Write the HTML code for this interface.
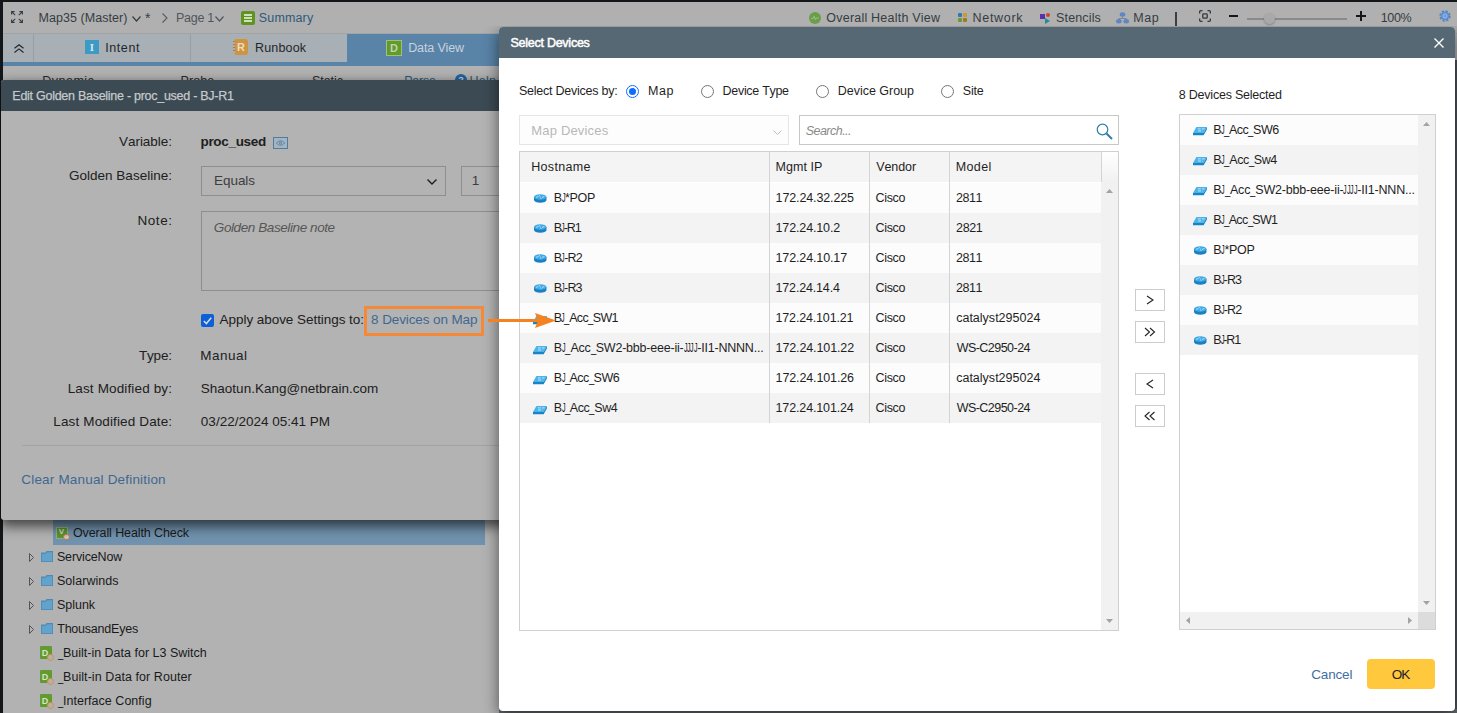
<!DOCTYPE html>
<html lang="en">
<head>
<meta charset="utf-8">
<title>Select Devices</title>
<style>
*{box-sizing:border-box;margin:0;padding:0}
html,body{width:1457px;height:713px;overflow:hidden;background:#14171a}
body{position:relative;font-family:"Liberation Sans",sans-serif;font-size:12.5px;color:#1c1c1c;font-kerning:none}
.a{position:absolute}
.sj,.su{display:inline-block;transform-origin:0 0;margin-right:var(--ls);letter-spacing:0}
.sj{transform:scaleX(.58);width:.29em}
.su{transform:scaleX(.76);width:.4226em}
.t{position:absolute;white-space:nowrap;line-height:20px;height:20px}
svg{position:absolute;overflow:visible}
#app{left:3px;top:2px;width:1454px;height:711px;background:#b2b2b2}
#toolbar{left:3px;top:2px;width:1454px;height:31px;background:#b0b0b0}
.tb{color:#353d42}
#tabs{left:3px;top:34px;width:496px;height:28px;background:#a8afb5}
.tab{color:#23272b}
#tabline{left:3px;top:62px;width:496px;height:4px;background:#5983a7}
.sub{color:#2a2a2a}
#dlg1{left:1px;top:80px;width:520px;height:440px;background:#b3b3b3;border-radius:3px 0 0 3px;box-shadow:0 5px 13px 1px rgba(0,0,0,.65)}
#dlg1hd{left:1px;top:80px;width:520px;height:31px;background:#3c4a53;border-radius:3px 0 0 0}
.l1{color:#202020}
.box{position:absolute;border:1px solid #8e8e8e;background:#b3b3b3}
.tr{color:#1a1a1a}
#dlg2{left:499px;top:27px;width:956px;height:684px;background:#fff;border-radius:4px;box-shadow:0 5px 15px rgba(0,0,0,.55);clip-path:inset(-1px -30px -30px -30px)}
#dlg2hd{left:499px;top:27px;width:956px;height:31px;background:#566874;border-radius:4px 4px 0 0}
.d{color:#1f1f1f}
.radio{position:absolute;width:13px;height:13px;border:1px solid #767676;border-radius:50%;background:#fff}
.radio.on{border:1.500px solid #0d6efd}
.radio.on:after{content:"";position:absolute;left:1.500px;top:1.500px;width:7px;height:7px;border-radius:50%;background:#0d6efd}
.row{position:absolute;left:520px;width:581px;height:30px}
.odd{background:#fcfcfc}.even{background:#f3f3f3}
.vl{position:absolute;width:1px;background:#d4d4d4}
.mv{position:absolute;left:1135px;width:30px;height:22px;border:1px solid #ccc;background:#fff}
.sbar{position:absolute;background:#f1f1f1}
.rrow{position:absolute;left:1180px;width:238px;height:30px}
</style>
</head>
<body>
<div id="app" class="a"></div>
<div id="toolbar" class="a"></div><div class="a" style="left:3px;top:33px;width:1454px;height:1px;background:#a0a4a7"></div>
<svg style="left:10.700px;top:10.500px" width="12" height="12" viewBox="0 0 12 12" fill="none" stroke="#353d42" stroke-width="1.100"><path d="M0.600 3.600V0.600H3.600M0.800 0.800L4.200 4.200M8.400 0.600H11.400V3.600M11.200 0.800L7.800 4.200M0.600 8.400V11.400H3.600M0.800 11.200L4.200 7.800M11.400 8.400V11.400H8.400M11.200 11.200L7.800 7.800"/></svg>
<div class="t tb" style="left:38.47px;top:8px;font-size:12.5px;letter-spacing:0.06px;">Map35 (Master)</div>
<svg style="left:132px;top:15.500px" width="9" height="6" viewBox="0 0 9 6" fill="none" stroke="#353d42" stroke-width="1.200"><path d="M0.500 0.500L4.500 5L8.500 0.500"/></svg>
<div class="t tb" style="left:145px;font-size:14px;top:8px">*</div>
<svg style="left:161.500px;top:13px" width="6" height="10" viewBox="0 0 6 10" fill="none" stroke="#555c61" stroke-width="1.100"><path d="M0.500 0.500L5 5L0.500 9.500"/></svg>
<div class="t tb" style="left:176.07px;top:8px;font-size:12.5px;letter-spacing:-0.3px;color:#50575c">Page 1</div>
<svg style="left:215px;top:15.500px" width="9" height="6" viewBox="0 0 9 6" fill="none" stroke="#50575c" stroke-width="1.200"><path d="M0.500 0.500L4.500 5L8.500 0.500"/></svg>
<div class="a" style="left:241px;top:11px;width:14px;height:14px;border-radius:2px;background:#5f9422"></div>
<div class="a" style="left:244px;top:14px;width:8px;height:1.500px;background:#cfe0b8;box-shadow:0 3px 0 #cfe0b8,0 6px 0 #cfe0b8"></div>
<div class="t tb" style="left:258.83px;top:8px;font-size:12.5px;letter-spacing:0.14px;color:#2f5a7a">Summary</div>
<div class="a" style="left:809px;top:11.500px;width:12px;height:12px;border-radius:50%;background:#6a9e4a"></div>
<svg style="left:811px;top:14.500px" width="8" height="6" viewBox="0 0 9 7" fill="none" stroke="#a9c996" stroke-width="0.900"><path d="M0 4H2.500L3.500 1.500L5 5.500L6 3.500H9"/></svg>
<div class="t tb" style="left:826.31px;top:8px;font-size:12.5px;letter-spacing:0.22px;">Overall Health View</div>
<div class="a" style="left:958px;top:13px;width:4px;height:4px;background:#2f78b4;border-radius:1px;box-shadow:5px 0 0 #c99a2e,0 5px 0 #6b9a34,5px 5px 0 #9a7a24"></div>
<div class="t tb" style="left:972.57px;top:8px;font-size:12.5px;letter-spacing:0.68px;">Network</div>
<div class="a" style="left:1040px;top:14px;width:5px;height:5px;background:#5a2fa8"></div><div class="a" style="left:1046px;top:13px;width:4px;height:4px;border-radius:50%;background:#c8452d"></div><svg style="left:1045px;top:18px" width="5" height="6" viewBox="0 0 5 6"><path d="M0 0L5 3L0 6z" fill="#1d8f9a"/></svg>
<div class="t tb" style="left:1056.03px;top:8px;font-size:12.5px;letter-spacing:0.15px;">Stencils</div>
<svg style="left:1116px;top:12px" width="13" height="12" viewBox="0 0 13 12"><ellipse cx="6.500" cy="2.500" rx="2.800" ry="2.200" fill="#5e86c4"/><ellipse cx="2.800" cy="9.300" rx="2.800" ry="2.200" fill="#5e86c4"/><ellipse cx="10.200" cy="9.300" rx="2.800" ry="2.200" fill="#5e86c4"/><path d="M6.500 4.500V6.500M2.800 7.500V6.500H10.200V7.500" stroke="#6f7f90" stroke-width=".8" fill="none"/></svg>
<div class="t tb" style="left:1133.27px;top:8px;font-size:12.5px;letter-spacing:0.62px;">Map</div>
<div class="a" style="left:1175px;top:12px;width:1.500px;height:14px;background:#3a3f43"></div>
<svg style="left:1199px;top:10px" width="12" height="12" viewBox="0 0 12 12" fill="none" stroke="#33393d" stroke-width="1.300"><path d="M0.650 3.500V1.700Q0.650 0.650 1.700 0.650H3.500M8.500 0.650H10.300Q11.350 0.650 11.350 1.700V3.500M11.350 8.500V10.300Q11.350 11.350 10.300 11.350H8.500M3.500 11.350H1.700Q0.650 11.350 0.650 10.300V8.500"/><rect x="3.800" y="3.800" width="4.400" height="4.400" rx=".8"/></svg>
<div class="a" style="left:1229px;top:15px;width:9px;height:2px;background:#15181a"></div>
<div class="a" style="left:1247px;top:18px;width:100px;height:1.500px;background:#8a8a8a"></div>
<div class="a" style="left:1264px;top:13px;width:11px;height:11px;border-radius:50%;background:#a9a9a9;box-shadow:0 1px 2px rgba(0,0,0,.25)"></div>
<div class="a" style="left:1356px;top:15px;width:10px;height:2px;background:#15181a"></div><div class="a" style="left:1360px;top:11px;width:2px;height:10px;background:#15181a"></div>
<div class="t tb" style="left:1380.75px;top:8px;font-size:12.5px;letter-spacing:-0.36px;">100%</div>
<svg style="left:1439px;top:10px" width="12" height="12" viewBox="0 0 13 13"><circle cx="6.500" cy="6.500" r="5.200" fill="none" stroke="#5586c8" stroke-width="2" stroke-dasharray="2.500 1.580"/><circle cx="6.500" cy="6.500" r="4.600" fill="#5b8bcd"/><circle cx="6.500" cy="6.500" r="2.300" fill="#6d99d6" stroke="#a9c1e4" stroke-width="1"/></svg>
<div id="tabs" class="a"></div>
<div class="a" style="left:33px;top:34px;width:1px;height:28px;background:#979ea4"></div>
<div class="a" style="left:190px;top:34px;width:1px;height:28px;background:#979ea4"></div>
<div class="a" style="left:347px;top:34px;width:152px;height:28px;background:#5983a7"></div>
<svg style="left:14px;top:44px" width="10" height="9" viewBox="0 0 10 9" fill="none" stroke="#23272b" stroke-width="1.200"><path d="M0.500 4.300L5 0.700L9.500 4.300M0.500 8.500L5 4.900L9.500 8.500"/></svg>
<div class="a" style="left:85px;top:40px;width:14px;height:14px;background:#3d9ac4"></div><div class="t" style="left:85px;top:37px;width:14px;text-align:center;font:bold 11px/20px 'Liberation Serif',serif;color:#d5e6ee">I</div>
<div class="t tab" style="left:105.25px;top:38px;font-size:12.5px;letter-spacing:0.57px;">Intent</div>
<div class="a" style="left:234px;top:39px;width:14px;height:16px;border-radius:3px;background:#cf9440"></div><div class="a" style="left:233px;top:41px;width:2px;height:12px;background:repeating-linear-gradient(#b57c2c 0 1.500px,#a8afb5 1.500px 3px)"></div><div class="t" style="left:234px;top:37px;width:14px;text-align:center;font:bold 11px/20px 'Liberation Sans',sans-serif;color:#ecdcc2">R</div>
<div class="t tab" style="left:254.97px;top:38px;font-size:12.5px;letter-spacing:0.18px;">Runbook</div>
<div class="a" style="left:386px;top:40px;width:16px;height:16px;background:#639a2c;border:1px solid #9fc27a"></div><div class="t" style="left:386px;top:38px;width:16px;text-align:center;font:bold 11px/20px 'Liberation Sans',sans-serif;color:#bdd3a8">D</div>
<div class="t tab" style="left:408.17px;top:38px;font-size:12.5px;letter-spacing:-0.13px;color:#c6d3de">Data View</div>
<div id="tabline" class="a"></div>
<div class="t sub" style="left:42.17px;top:71px;font-size:12.5px;letter-spacing:0.51px;">Dynamic</div>
<div class="t sub" style="left:180.47px;top:71px;font-size:12.5px;letter-spacing:0.08px;">Probe</div>
<div class="t sub" style="left:312.03px;top:71px;font-size:12.5px;letter-spacing:-0.07px;">Static</div>
<div class="t sub" style="left:404.27px;top:71px;font-size:12.5px;letter-spacing:-0.27px;color:#2d5878">Parse</div>
<div class="a" style="left:455px;top:74px;width:12px;height:12px;border-radius:50%;background:#24639c"></div><div class="t" style="left:455px;top:70px;width:12px;text-align:center;font:bold 9px/20px 'Liberation Sans',sans-serif;color:#c9d6e2">?</div>
<div class="t sub" style="left:469.47px;top:71px;font-size:12.5px;letter-spacing:0.28px;color:#2d5878">Help</div>
<div class="a" style="left:53px;top:520px;width:432px;height:25px;background:#7192ae"></div>
<div class="a" style="left:56px;top:527px;width:12px;height:12px;background:#5c9236;border:1px solid #8fb56e"></div><div class="t" style="left:56px;top:522px;width:11px;text-align:center;font:bold 8px/20px 'Liberation Sans',sans-serif;color:#cfe0bd">V</div><div class="a" style="left:63px;top:533.500px;width:6.500px;height:6.500px;border-radius:50%;background:#cfc6c0;border:1.500px solid #c17c45"></div>
<div class="t tr" style="left:72.91px;top:523px;font-size:12.5px;letter-spacing:-0.1px;">Overall Health Check</div>
<svg style="left:29px;top:552.5px" width="5" height="9" viewBox="0 0 5 9" fill="none" stroke="#4a4a4a" stroke-width="0.900"><path d="M0.500 0.500L4.500 4.500L0.500 8.500z"/></svg>
<svg style="left:41px;top:551px" width="12" height="11" viewBox="0 0 12 11"><path d="M0 1.500H4.500L5.500 0H12V11H0z" fill="#4d8ab5"/><path d="M0.800 2.800H5L6 1.200H11.200V10.200H0.800z" fill="#62a3cc"/></svg>
<div class="t tr" style="left:56.93px;top:547px;font-size:12.5px;letter-spacing:-0.14px;">ServiceNow</div>
<svg style="left:29px;top:576.5px" width="5" height="9" viewBox="0 0 5 9" fill="none" stroke="#4a4a4a" stroke-width="0.900"><path d="M0.500 0.500L4.500 4.500L0.500 8.500z"/></svg>
<svg style="left:41px;top:575px" width="12" height="11" viewBox="0 0 12 11"><path d="M0 1.500H4.500L5.500 0H12V11H0z" fill="#4d8ab5"/><path d="M0.800 2.800H5L6 1.200H11.200V10.200H0.800z" fill="#62a3cc"/></svg>
<div class="t tr" style="left:56.93px;top:571px;font-size:12.5px;letter-spacing:0.06px;">Solarwinds</div>
<svg style="left:29px;top:600.5px" width="5" height="9" viewBox="0 0 5 9" fill="none" stroke="#4a4a4a" stroke-width="0.900"><path d="M0.500 0.500L4.500 4.500L0.500 8.500z"/></svg>
<svg style="left:41px;top:599px" width="12" height="11" viewBox="0 0 12 11"><path d="M0 1.500H4.500L5.500 0H12V11H0z" fill="#4d8ab5"/><path d="M0.800 2.800H5L6 1.200H11.200V10.200H0.800z" fill="#62a3cc"/></svg>
<div class="t tr" style="left:56.93px;top:595px;font-size:12.5px;letter-spacing:-0.01px;">Splunk</div>
<svg style="left:29px;top:624.5px" width="5" height="9" viewBox="0 0 5 9" fill="none" stroke="#4a4a4a" stroke-width="0.900"><path d="M0.500 0.500L4.500 4.500L0.500 8.500z"/></svg>
<svg style="left:41px;top:623px" width="12" height="11" viewBox="0 0 12 11"><path d="M0 1.500H4.500L5.500 0H12V11H0z" fill="#4d8ab5"/><path d="M0.800 2.800H5L6 1.200H11.200V10.200H0.800z" fill="#62a3cc"/></svg>
<div class="t tr" style="left:57.22px;top:619px;font-size:12.5px;letter-spacing:-0.22px;">ThousandEyes</div>
<div class="a" style="left:40px;top:646px;width:12px;height:13px;background:#629a2e;border-radius:1px"></div><div class="t" style="left:40px;top:643px;width:10px;text-align:center;font:bold 9px/20px 'Liberation Sans',sans-serif;color:#d5e4c4">D</div><div class="a" style="left:47px;top:654px;width:7px;height:7px;border-radius:50%;background:#b9b0a0;border:1px solid #c9925a"></div>
<div class="t tr" style="left:57.64px;top:643px;font-size:12.5px;letter-spacing:0px;--ls:0px;"><span class="su">_</span>Built-in Data for L3 Switch</div>
<div class="a" style="left:40px;top:670px;width:12px;height:13px;background:#629a2e;border-radius:1px"></div><div class="t" style="left:40px;top:667px;width:10px;text-align:center;font:bold 9px/20px 'Liberation Sans',sans-serif;color:#d5e4c4">D</div><div class="a" style="left:47px;top:678px;width:7px;height:7px;border-radius:50%;background:#b9b0a0;border:1px solid #c9925a"></div>
<div class="t tr" style="left:57.64px;top:667px;font-size:12.5px;letter-spacing:0.07px;--ls:0.07px;"><span class="su">_</span>Built-in Data for Router</div>
<div class="a" style="left:40px;top:694px;width:12px;height:13px;background:#629a2e;border-radius:1px"></div><div class="t" style="left:40px;top:691px;width:10px;text-align:center;font:bold 9px/20px 'Liberation Sans',sans-serif;color:#d5e4c4">D</div><div class="a" style="left:47px;top:702px;width:7px;height:7px;border-radius:50%;background:#b9b0a0;border:1px solid #c9925a"></div>
<div class="t tr" style="left:57.64px;top:691px;font-size:12.5px;letter-spacing:0.03px;--ls:0.03px;"><span class="su">_</span>Interface Config</div>
<div id="dlg1" class="a"></div><div id="dlg1hd" class="a"></div>
<div class="t " style="left:12.37px;top:86px;font-size:12.5px;letter-spacing:-0.27px;color:#c5c9cb;-webkit-text-stroke:0.250px #c5c9cb">Edit Golden Baseline - proc_used - BJ-R1</div>
<div class="t l1" style="left:118.94px;top:132px;font-size:13.5px;letter-spacing:-0.02px;">Variable:</div>
<div class="t l1" style="left:200.51px;top:132px;font-size:13.5px;letter-spacing:-0.32px;font-weight:bold;">proc_used</div>
<div class="a" style="left:273px;top:137px;width:15px;height:12px;border:1px solid #4f7ca3;background:#a5b4c1"></div><svg style="left:276px;top:140px" width="9" height="6" viewBox="0 0 9 6" fill="none" stroke="#4f7ca3" stroke-width=".8"><path d="M0.300 3Q4.500 -1.500 8.700 3Q4.500 7.500 0.300 3z"/><circle cx="4.500" cy="3" r="1.100"/></svg>
<div class="t l1" style="left:68.92px;top:166px;font-size:13.5px;letter-spacing:0.02px;">Golden Baseline:</div>
<div class="box" style="left:201px;top:166px;width:245px;height:30px"></div>
<div class="t l1" style="left:214.09px;top:171px;font-size:13.5px;letter-spacing:-0.06px;color:#3d3d3d">Equals</div>
<svg style="left:427px;top:179px" width="10" height="6" viewBox="0 0 10 6" fill="none" stroke="#1d1d1d" stroke-width="1.400"><path d="M0.500 0.500L5 5L9.500 0.500"/></svg>
<div class="box" style="left:461px;top:166px;width:60px;height:30px"></div>
<div class="t l1" style="left:471.87px;top:171px;font-size:13.5px;letter-spacing:0px;color:#3d3d3d">1</div>
<div class="t l1" style="left:137.39px;top:211px;font-size:13.5px;letter-spacing:0.59px;">Note:</div>
<div class="box" style="left:201px;top:211px;width:320px;height:80px"></div>
<div class="t l1" style="left:213.83px;top:218px;font-size:13.5px;letter-spacing:-0.41px;font-style:italic;color:#575757">Golden Baseline note</div>
<div class="a" style="left:201px;top:314px;width:13px;height:13px;border-radius:2px;background:#0c5fd6"></div><svg style="left:203px;top:317px" width="9" height="8" viewBox="0 0 9 8" fill="none" stroke="#d8d8d8" stroke-width="1.600"><path d="M0.800 4L3.400 6.500L8.200 0.800"/></svg>
<div class="t l1" style="left:219.57px;top:310px;font-size:13.5px;letter-spacing:-0.05px;">Apply above Settings to:</div>
<div class="t l1" style="left:371.11px;top:310px;font-size:13.5px;letter-spacing:-0.11px;color:#3f6890">8 Devices on Map</div>
<div class="t l1" style="left:138.9px;top:346px;font-size:13.5px;letter-spacing:-0.16px;">Type:</div>
<div class="t l1" style="left:200.29px;top:346px;font-size:13.5px;letter-spacing:0.49px;">Manual</div>
<div class="t l1" style="left:67.69px;top:379px;font-size:13.5px;letter-spacing:0.14px;">Last Modified by:</div>
<div class="t l1" style="left:200.79px;top:379px;font-size:13.5px;letter-spacing:0.01px;">Shaotun.Kang@netbrain.com</div>
<div class="t l1" style="left:53.29px;top:412px;font-size:13.5px;letter-spacing:0.14px;">Last Modified Date:</div>
<div class="t l1" style="left:200.87px;top:412px;font-size:13.5px;letter-spacing:0px;">03/22/2024 05:41 PM</div>
<div class="a" style="left:22px;top:445px;width:480px;height:1px;background:#a3a3a3"></div>
<div class="t l1" style="left:21.31px;top:470px;font-size:13.5px;letter-spacing:0.18px;color:#3f6890">Clear Manual Definition</div>
<div class="a" style="left:1455px;top:60px;width:2px;height:653px;background:#4d5459"></div><div class="a" style="left:499px;top:709px;width:958px;height:4px;background:#666c70"></div>
<div id="dlg2" class="a"></div><div id="dlg2hd" class="a"></div>
<div class="t " style="left:510.43px;top:33px;font-size:12.5px;letter-spacing:-0.25px;color:#fff;-webkit-text-stroke:0.500px #fff">Select Devices</div>
<svg style="left:1434px;top:38px" width="10" height="10" viewBox="0 0 10 10" fill="none" stroke="#fff" stroke-width="1.400"><path d="M0.500 0.500L9.500 9.500M9.500 0.500L0.500 9.500"/></svg>
<div class="t d" style="left:518.93px;top:81px;font-size:12.5px;letter-spacing:-0.24px;">Select Devices by:</div>
<div class="radio on" style="left:626px;top:85px"></div>
<div class="t d" style="left:648.07px;top:81px;font-size:12.5px;letter-spacing:0.52px;">Map</div>
<div class="radio" style="left:701px;top:85px"></div>
<div class="t d" style="left:722.57px;top:81px;font-size:12.5px;letter-spacing:-0.3px;">Device Type</div>
<div class="radio" style="left:816px;top:85px"></div>
<div class="t d" style="left:837.87px;top:81px;font-size:12.5px;letter-spacing:-0.03px;">Device Group</div>
<div class="radio" style="left:941px;top:85px"></div>
<div class="t d" style="left:962.83px;top:81px;font-size:12.5px;letter-spacing:-0.2px;">Site</div>
<div class="a" style="left:519px;top:115px;width:270px;height:30px;border:1px solid #e6e6e6;background:#fdfdfd"></div>
<div class="t d" style="left:531.33px;top:121px;font-size:13px;letter-spacing:0.17px;color:#b8b8b8">Map Devices</div>
<svg style="left:772.500px;top:129.500px" width="9" height="5" viewBox="0 0 9 5" fill="none" stroke="#bdbdbd" stroke-width="1"><path d="M0.500 0.500L4.500 4.500L8.500 0.500"/></svg>
<div class="a" style="left:799px;top:115px;width:320px;height:30px;border:1px solid #c8c8c8;background:#fff"></div>
<div class="t d" style="left:805.65px;top:121px;font-size:12.5px;letter-spacing:-0.52px;font-style:italic;color:#8a8a8a">Search...</div>
<svg style="left:1096px;top:123px" width="17" height="17" viewBox="0 0 17 17" fill="none" stroke="#2e7fa8"><circle cx="6.500" cy="6.500" r="5.300" stroke-width="1.200"/><path d="M10.500 10.500L16 16" stroke-width="2"/></svg>
<div class="a" style="left:519px;top:151px;width:600px;height:480px;border:1px solid #d0d0d0;background:#fff"></div>
<div class="a" style="left:520px;top:152px;width:581px;height:30px;background:#f4f4f4"></div>
<div class="sbar" style="left:1101px;top:152px;width:17px;height:478px"></div><div class="a" style="left:1101px;top:152px;width:17px;height:30px;background:linear-gradient(#fff,#f1f1f1)"></div>
<div class="row odd" style="top:183px"></div>
<div class="row even" style="top:213px"></div>
<div class="row odd" style="top:243px"></div>
<div class="row even" style="top:273px"></div>
<div class="row odd" style="top:303px"></div>
<div class="row even" style="top:333px"></div>
<div class="row odd" style="top:363px"></div>
<div class="row even" style="top:393px"></div>
<div class="vl" style="left:769px;top:152px;height:271px"></div>
<div class="vl" style="left:869px;top:152px;height:271px"></div>
<div class="vl" style="left:949px;top:152px;height:271px"></div>
<div class="vl" style="left:1101px;top:152px;height:30px"></div>
<div class="t d" style="left:531.27px;top:157px;font-size:12.5px;letter-spacing:0.3px;">Hostname</div>
<div class="t d" style="left:775.47px;top:157px;font-size:12.5px;letter-spacing:0.07px;">Mgmt IP</div>
<div class="t d" style="left:876.15px;top:157px;font-size:12.5px;letter-spacing:-0.07px;">Vendor</div>
<div class="t d" style="left:955.67px;top:157px;font-size:12.5px;letter-spacing:0.4px;">Model</div>
<svg style="left:533.6px;top:194px" width="12.500" height="9" viewBox="0 0 13 9"><path d="M0 2.900V6.100A6.500 2.900 0 0 0 13 6.100V2.900z" fill="#1b80c2"/><ellipse cx="6.500" cy="2.900" rx="6.500" ry="2.900" fill="#41aae6"/><path d="M2.200 3.300l2.500-.9M10.800 2.500l-2.500.9M5.300 1.300l1.400.9M7.700 4.500l-1.400-.9" stroke="#d9effc" stroke-width=".8" fill="none"/></svg>
<div class="t d" style="left:553.77px;top:188px;font-size:12.5px;letter-spacing:-0.33px;--ls:-0.33px;">B<span class="sj">J</span>*POP</div>
<div class="t d" style="left:775.55px;top:188px;font-size:12.5px;letter-spacing:-0.12px;">172.24.32.225</div>
<div class="t d" style="left:875.57px;top:188px;font-size:12.5px;letter-spacing:-0.35px;">Cisco</div>
<div class="t d" style="left:956.07px;top:188px;font-size:12.5px;letter-spacing:-0.46px;">2811</div>
<svg style="left:533.6px;top:224px" width="12.500" height="9" viewBox="0 0 13 9"><path d="M0 2.900V6.100A6.500 2.900 0 0 0 13 6.100V2.900z" fill="#1b80c2"/><ellipse cx="6.500" cy="2.900" rx="6.500" ry="2.900" fill="#41aae6"/><path d="M2.200 3.300l2.500-.9M10.800 2.500l-2.500.9M5.300 1.300l1.400.9M7.700 4.500l-1.400-.9" stroke="#d9effc" stroke-width=".8" fill="none"/></svg>
<div class="t d" style="left:553.77px;top:218px;font-size:12.5px;letter-spacing:-1.04px;--ls:-1.04px;">B<span class="sj">J</span>-R1</div>
<div class="t d" style="left:775.55px;top:218px;font-size:12.5px;letter-spacing:-0.14px;">172.24.10.2</div>
<div class="t d" style="left:875.57px;top:218px;font-size:12.5px;letter-spacing:-0.35px;">Cisco</div>
<div class="t d" style="left:956.07px;top:218px;font-size:12.5px;letter-spacing:-0.36px;">2821</div>
<svg style="left:533.6px;top:254px" width="12.500" height="9" viewBox="0 0 13 9"><path d="M0 2.900V6.100A6.500 2.900 0 0 0 13 6.100V2.900z" fill="#1b80c2"/><ellipse cx="6.500" cy="2.900" rx="6.500" ry="2.900" fill="#41aae6"/><path d="M2.200 3.300l2.500-.9M10.800 2.500l-2.500.9M5.300 1.300l1.400.9M7.700 4.500l-1.400-.9" stroke="#d9effc" stroke-width=".8" fill="none"/></svg>
<div class="t d" style="left:553.77px;top:248px;font-size:12.5px;letter-spacing:-0.81px;--ls:-0.81px;">B<span class="sj">J</span>-R2</div>
<div class="t d" style="left:775.55px;top:248px;font-size:12.5px;letter-spacing:-0.13px;">172.24.10.17</div>
<div class="t d" style="left:875.57px;top:248px;font-size:12.5px;letter-spacing:-0.35px;">Cisco</div>
<div class="t d" style="left:956.07px;top:248px;font-size:12.5px;letter-spacing:-0.46px;">2811</div>
<svg style="left:533.6px;top:284px" width="12.500" height="9" viewBox="0 0 13 9"><path d="M0 2.900V6.100A6.500 2.900 0 0 0 13 6.100V2.900z" fill="#1b80c2"/><ellipse cx="6.500" cy="2.900" rx="6.500" ry="2.900" fill="#41aae6"/><path d="M2.200 3.300l2.500-.9M10.800 2.500l-2.500.9M5.300 1.300l1.400.9M7.700 4.500l-1.400-.9" stroke="#d9effc" stroke-width=".8" fill="none"/></svg>
<div class="t d" style="left:553.77px;top:278px;font-size:12.5px;letter-spacing:-0.83px;--ls:-0.83px;">B<span class="sj">J</span>-R3</div>
<div class="t d" style="left:775.55px;top:278px;font-size:12.5px;letter-spacing:-0.17px;">172.24.14.4</div>
<div class="t d" style="left:875.57px;top:278px;font-size:12.5px;letter-spacing:-0.35px;">Cisco</div>
<div class="t d" style="left:956.07px;top:278px;font-size:12.5px;letter-spacing:-0.46px;">2811</div>
<svg style="left:533px;top:315.5px" width="14" height="8.500" viewBox="0 0 15 9" preserveAspectRatio="none"><path d="M0 6.300L3.600 0H15l-3.600 6.300z" fill="#4cb3ea"/><path d="M0 6.300h11.400L15 0v2.300L11.400 8.800H0z" fill="#1784c6"/><path d="M5.200 2h3.200M8.600 4.200H5.400M9.600 2h2.800M10 4.200h-0.500" stroke="#d6eefb" stroke-width=".9" fill="none"/></svg>
<div class="t d" style="left:553.77px;top:308px;font-size:12.5px;letter-spacing:-0.64px;--ls:-0.64px;">B<span class="sj">J</span><span class="su">_</span>Acc<span class="su">_</span>SW1</div>
<div class="t d" style="left:775.55px;top:308px;font-size:12.5px;letter-spacing:-0.17px;">172.24.101.21</div>
<div class="t d" style="left:875.57px;top:308px;font-size:12.5px;letter-spacing:-0.35px;">Cisco</div>
<div class="t d" style="left:956.17px;top:308px;font-size:12.5px;letter-spacing:0.01px;">catalyst295024</div>
<svg style="left:533px;top:345.5px" width="14" height="8.500" viewBox="0 0 15 9" preserveAspectRatio="none"><path d="M0 6.300L3.600 0H15l-3.600 6.300z" fill="#4cb3ea"/><path d="M0 6.300h11.400L15 0v2.300L11.400 8.800H0z" fill="#1784c6"/><path d="M5.200 2h3.200M8.600 4.200H5.400M9.600 2h2.800M10 4.200h-0.500" stroke="#d6eefb" stroke-width=".9" fill="none"/></svg>
<div class="t d" style="left:553.77px;top:338px;font-size:12.5px;letter-spacing:-0.21px;--ls:-0.21px;">B<span class="sj">J</span><span class="su">_</span>Acc<span class="su">_</span>SW2-bbb-eee-ii-<span class="sj">J</span><span class="sj">J</span><span class="sj">J</span><span class="sj">J</span>-II1-NNNN...</div>
<div class="t d" style="left:775.55px;top:338px;font-size:12.5px;letter-spacing:-0.11px;">172.24.101.22</div>
<div class="t d" style="left:875.57px;top:338px;font-size:12.5px;letter-spacing:-0.35px;">Cisco</div>
<div class="t d" style="left:956.65px;top:338px;font-size:12.5px;letter-spacing:-0.53px;">WS-C2950-24</div>
<svg style="left:533px;top:375.5px" width="14" height="8.500" viewBox="0 0 15 9" preserveAspectRatio="none"><path d="M0 6.300L3.600 0H15l-3.600 6.300z" fill="#4cb3ea"/><path d="M0 6.300h11.400L15 0v2.300L11.400 8.800H0z" fill="#1784c6"/><path d="M5.200 2h3.200M8.600 4.200H5.400M9.600 2h2.800M10 4.200h-0.500" stroke="#d6eefb" stroke-width=".9" fill="none"/></svg>
<div class="t d" style="left:553.77px;top:368px;font-size:12.5px;letter-spacing:-0.51px;--ls:-0.51px;">B<span class="sj">J</span><span class="su">_</span>Acc<span class="su">_</span>SW6</div>
<div class="t d" style="left:775.55px;top:368px;font-size:12.5px;letter-spacing:-0.12px;">172.24.101.26</div>
<div class="t d" style="left:875.57px;top:368px;font-size:12.5px;letter-spacing:-0.35px;">Cisco</div>
<div class="t d" style="left:956.17px;top:368px;font-size:12.5px;letter-spacing:0.01px;">catalyst295024</div>
<svg style="left:533px;top:405.5px" width="14" height="8.500" viewBox="0 0 15 9" preserveAspectRatio="none"><path d="M0 6.300L3.600 0H15l-3.600 6.300z" fill="#4cb3ea"/><path d="M0 6.300h11.400L15 0v2.300L11.400 8.800H0z" fill="#1784c6"/><path d="M5.200 2h3.200M8.600 4.200H5.400M9.600 2h2.800M10 4.200h-0.500" stroke="#d6eefb" stroke-width=".9" fill="none"/></svg>
<div class="t d" style="left:553.77px;top:398px;font-size:12.5px;letter-spacing:-0.41px;--ls:-0.41px;">B<span class="sj">J</span><span class="su">_</span>Acc<span class="su">_</span>Sw4</div>
<div class="t d" style="left:775.55px;top:398px;font-size:12.5px;letter-spacing:-0.14px;">172.24.101.24</div>
<div class="t d" style="left:875.57px;top:398px;font-size:12.5px;letter-spacing:-0.35px;">Cisco</div>
<div class="t d" style="left:956.65px;top:398px;font-size:12.5px;letter-spacing:-0.53px;">WS-C2950-24</div>
<svg style="left:1106px;top:189px" width="7" height="4" viewBox="0 0 7 4"><path d="M0 4L3.500 0L7 4z" fill="#a3a3a3"/></svg><svg style="left:1106px;top:619px" width="7" height="4" viewBox="0 0 7 4"><path d="M0 0L3.500 4L7 0z" fill="#a3a3a3"/></svg>
<div class="mv" style="top:289px"></div><svg style="left:1145px;top:296px" width="10" height="8" viewBox="0 0 10 8" fill="none" stroke="#222" stroke-width="1.100"><path d="M2 0L8 4L2 8"/></svg>
<div class="mv" style="top:321px"></div><svg style="left:1145px;top:328px" width="10" height="8" viewBox="0 0 10 8" fill="none" stroke="#222" stroke-width="1.100"><path d="M0 0L4.500 4L0 8M5 0L9.500 4L5 8"/></svg>
<div class="mv" style="top:373px"></div><svg style="left:1145px;top:380px" width="10" height="8" viewBox="0 0 10 8" fill="none" stroke="#222" stroke-width="1.100"><path d="M8 0L2 4L8 8"/></svg>
<div class="mv" style="top:405px"></div><svg style="left:1145px;top:412px" width="10" height="8" viewBox="0 0 10 8" fill="none" stroke="#222" stroke-width="1.100"><path d="M4.500 0L0 4L4.500 8M9.500 0L5 4L9.500 8"/></svg>
<div class="t d" style="left:1178.86px;top:85px;font-size:12.5px;letter-spacing:-0.23px;">8 Devices Selected</div>
<div class="a" style="left:1179px;top:114px;width:257px;height:516px;border:1px solid #d0d0d0;background:#fff"></div>
<div class="sbar" style="left:1418px;top:115px;width:17px;height:514px"></div><div class="sbar" style="left:1180px;top:612px;width:238px;height:17px"></div><div class="a" style="left:1418px;top:612px;width:17px;height:17px;background:#dcdcdc"></div>
<div class="rrow odd" style="top:115px"></div>
<svg style="left:1193px;top:126.5px" width="14" height="8.500" viewBox="0 0 15 9" preserveAspectRatio="none"><path d="M0 6.300L3.600 0H15l-3.600 6.300z" fill="#4cb3ea"/><path d="M0 6.300h11.400L15 0v2.300L11.400 8.800H0z" fill="#1784c6"/><path d="M5.200 2h3.200M8.600 4.200H5.400M9.600 2h2.800M10 4.200h-0.500" stroke="#d6eefb" stroke-width=".9" fill="none"/></svg>
<div class="t d" style="left:1213.27px;top:120px;font-size:12.5px;letter-spacing:-0.51px;--ls:-0.51px;">B<span class="sj">J</span><span class="su">_</span>Acc<span class="su">_</span>SW6</div>
<div class="rrow even" style="top:145px"></div>
<svg style="left:1193px;top:156.5px" width="14" height="8.500" viewBox="0 0 15 9" preserveAspectRatio="none"><path d="M0 6.300L3.600 0H15l-3.600 6.300z" fill="#4cb3ea"/><path d="M0 6.300h11.400L15 0v2.300L11.400 8.800H0z" fill="#1784c6"/><path d="M5.200 2h3.200M8.600 4.200H5.400M9.600 2h2.800M10 4.200h-0.500" stroke="#d6eefb" stroke-width=".9" fill="none"/></svg>
<div class="t d" style="left:1213.27px;top:150px;font-size:12.5px;letter-spacing:-0.41px;--ls:-0.41px;">B<span class="sj">J</span><span class="su">_</span>Acc<span class="su">_</span>Sw4</div>
<div class="rrow odd" style="top:175px"></div>
<svg style="left:1193px;top:186.5px" width="14" height="8.500" viewBox="0 0 15 9" preserveAspectRatio="none"><path d="M0 6.300L3.600 0H15l-3.600 6.300z" fill="#4cb3ea"/><path d="M0 6.300h11.400L15 0v2.300L11.400 8.800H0z" fill="#1784c6"/><path d="M5.200 2h3.200M8.600 4.200H5.400M9.600 2h2.800M10 4.200h-0.500" stroke="#d6eefb" stroke-width=".9" fill="none"/></svg>
<div class="t d" style="left:1213.27px;top:180px;font-size:12.5px;letter-spacing:-0.19px;--ls:-0.19px;">B<span class="sj">J</span><span class="su">_</span>Acc<span class="su">_</span>SW2-bbb-eee-ii-<span class="sj">J</span><span class="sj">J</span><span class="sj">J</span><span class="sj">J</span>-II1-NNN...</div>
<div class="rrow even" style="top:205px"></div>
<svg style="left:1193px;top:216.5px" width="14" height="8.500" viewBox="0 0 15 9" preserveAspectRatio="none"><path d="M0 6.300L3.600 0H15l-3.600 6.300z" fill="#4cb3ea"/><path d="M0 6.300h11.400L15 0v2.300L11.400 8.800H0z" fill="#1784c6"/><path d="M5.200 2h3.200M8.600 4.200H5.400M9.600 2h2.800M10 4.200h-0.500" stroke="#d6eefb" stroke-width=".9" fill="none"/></svg>
<div class="t d" style="left:1213.27px;top:210px;font-size:12.5px;letter-spacing:-0.64px;--ls:-0.64px;">B<span class="sj">J</span><span class="su">_</span>Acc<span class="su">_</span>SW1</div>
<div class="rrow odd" style="top:235px"></div>
<svg style="left:1193.5px;top:246px" width="12.500" height="9" viewBox="0 0 13 9"><path d="M0 2.900V6.100A6.500 2.900 0 0 0 13 6.100V2.900z" fill="#1b80c2"/><ellipse cx="6.500" cy="2.900" rx="6.500" ry="2.900" fill="#41aae6"/><path d="M2.200 3.300l2.500-.9M10.800 2.500l-2.500.9M5.300 1.300l1.400.9M7.700 4.500l-1.400-.9" stroke="#d9effc" stroke-width=".8" fill="none"/></svg>
<div class="t d" style="left:1213.27px;top:240px;font-size:12.5px;letter-spacing:-0.33px;--ls:-0.33px;">B<span class="sj">J</span>*POP</div>
<div class="rrow even" style="top:265px"></div>
<svg style="left:1193.5px;top:276px" width="12.500" height="9" viewBox="0 0 13 9"><path d="M0 2.900V6.100A6.500 2.900 0 0 0 13 6.100V2.900z" fill="#1b80c2"/><ellipse cx="6.500" cy="2.900" rx="6.500" ry="2.900" fill="#41aae6"/><path d="M2.200 3.300l2.500-.9M10.800 2.500l-2.500.9M5.300 1.300l1.400.9M7.700 4.500l-1.400-.9" stroke="#d9effc" stroke-width=".8" fill="none"/></svg>
<div class="t d" style="left:1213.27px;top:270px;font-size:12.5px;letter-spacing:-0.83px;--ls:-0.83px;">B<span class="sj">J</span>-R3</div>
<div class="rrow odd" style="top:295px"></div>
<svg style="left:1193.5px;top:306px" width="12.500" height="9" viewBox="0 0 13 9"><path d="M0 2.900V6.100A6.500 2.900 0 0 0 13 6.100V2.900z" fill="#1b80c2"/><ellipse cx="6.500" cy="2.900" rx="6.500" ry="2.900" fill="#41aae6"/><path d="M2.200 3.300l2.500-.9M10.800 2.500l-2.500.9M5.300 1.300l1.400.9M7.700 4.500l-1.400-.9" stroke="#d9effc" stroke-width=".8" fill="none"/></svg>
<div class="t d" style="left:1213.27px;top:300px;font-size:12.5px;letter-spacing:-0.81px;--ls:-0.81px;">B<span class="sj">J</span>-R2</div>
<div class="rrow even" style="top:325px"></div>
<svg style="left:1193.5px;top:336px" width="12.500" height="9" viewBox="0 0 13 9"><path d="M0 2.900V6.100A6.500 2.900 0 0 0 13 6.100V2.900z" fill="#1b80c2"/><ellipse cx="6.500" cy="2.900" rx="6.500" ry="2.900" fill="#41aae6"/><path d="M2.200 3.300l2.500-.9M10.800 2.500l-2.500.9M5.300 1.300l1.400.9M7.700 4.500l-1.400-.9" stroke="#d9effc" stroke-width=".8" fill="none"/></svg>
<div class="t d" style="left:1213.27px;top:330px;font-size:12.5px;letter-spacing:-1.04px;--ls:-1.04px;">B<span class="sj">J</span>-R1</div>
<svg style="left:1423px;top:121.500px" width="7" height="4" viewBox="0 0 7 4"><path d="M0 4L3.500 0L7 4z" fill="#a3a3a3"/></svg><svg style="left:1423px;top:601px" width="7" height="4" viewBox="0 0 7 4"><path d="M0 0L3.500 4L7 0z" fill="#a3a3a3"/></svg>
<svg style="left:1186px;top:617px" width="4" height="7" viewBox="0 0 4 7"><path d="M4 0L0 3.500L4 7z" fill="#a3a3a3"/></svg><svg style="left:1408px;top:617px" width="4" height="7" viewBox="0 0 4 7"><path d="M0 0L4 3.500L0 7z" fill="#a3a3a3"/></svg>
<div class="t " style="left:1311.21px;top:665px;font-size:13.5px;letter-spacing:-0.15px;color:#3f6f9f">Cancel</div>
<div class="a" style="left:1367px;top:659px;width:68px;height:30px;border-radius:4px;background:#ffc83d"></div>
<div class="t " style="left:1391.86px;top:665px;font-size:13.5px;letter-spacing:-1.2px;color:#222">OK</div>
<div class="a" style="left:364px;top:306px;width:120px;height:29.500px;border:3px solid #f5893a"></div>
<div class="a" style="left:488px;top:318.500px;width:52px;height:3px;background:#f5821f"></div>
<svg style="left:534.500px;top:312.500px" width="21" height="15" viewBox="0 0 21 15"><path d="M0 0L21 7.500L0 15L3 7.500z" fill="#f5821f"/></svg>
</body>
</html>
